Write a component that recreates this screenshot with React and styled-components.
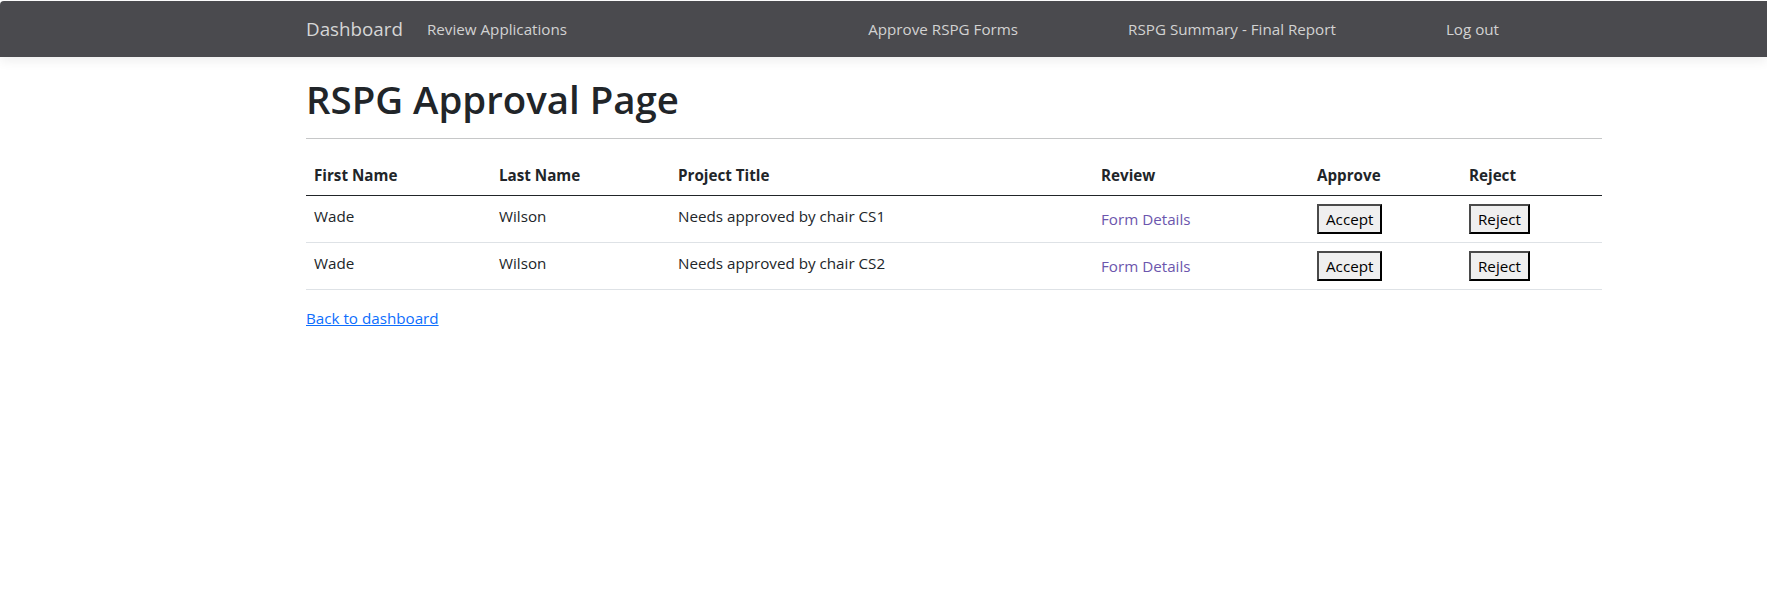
import React from "react";
import styled, { createGlobalStyle } from "styled-components";

const GlobalStyle = createGlobalStyle`
  body {
    margin: 0;
    padding-top: 1px;
    background: #fff;
    font-family: "Open Sans", "Liberation Sans", sans-serif;
    font-size: 15.2px;
    color: #212529;
  }
`;

const Navbar = styled.nav`
  height: 56px;
  background: #4a4a4e;
  border-top-left-radius: 4px;
  box-shadow: 0 4px 12px rgba(0, 0, 0, 0.07);
  display: flex;
  align-items: center;
`;

const NavInner = styled.div`
  width: 1296px;
  margin-left: 306px;
  display: flex;
  align-items: center;
`;

const Brand = styled.a`
  font-size: 18.8px;
  color: #d6d6d6;
  text-decoration: none;
  margin-right: 24px;
`;

const NavLink = styled.a`
  font-size: 15.2px;
  color: #d2d2d2;
  text-decoration: none;
`;

const Spacer = styled.div`
  flex: 1;
`;

const NavRight = styled.div`
  display: flex;
  align-items: center;
  gap: 110px;
  margin-right: 103px;
`;

const Main = styled.main`
  width: 1296px;
  margin-left: 306px;
  padding-top: 20px;
`;

const Title = styled.h1`
  margin: 0;
  font-size: 38.4px;
  font-weight: 600;
  line-height: 45px;
  color: #212529;
`;

const Rule = styled.hr`
  margin: 16px 0 16px;
  border: 0;
  border-top: 1px solid #c6c7c8;
`;

const Table = styled.table`
  width: 100%;
  border-collapse: collapse;
  margin-bottom: 16px;
  table-layout: fixed;
`;

const Th = styled.th`
  box-sizing: border-box;
  text-align: left;
  font-weight: 700;
  padding: 8px;
  line-height: 24px;
  border-bottom: 1.5px solid #212529;
  width: ${(p) => p.$w}px;
`;

const Td = styled.td`
  padding: 8px;
  line-height: 24px;
  border-bottom: 1px solid #dee2e6;
  vertical-align: top;
`;

const DetailsLink = styled.a`
  display: inline-block;
  padding-top: 3px;
  color: #6c56ad;
  text-decoration: none;
`;

const ActionButton = styled.button`
  font-family: "Open Sans", "Liberation Sans", sans-serif;
  font-size: 15.2px;
  color: #000;
  background: #efefef;
  border: 2px solid #000;
  border-color: #4a4a4a #000 #000 #4a4a4a;
  height: 30px;
  padding: 0 7px;
  line-height: 24px;
`;

const BackLink = styled.a`
  color: #0d6efd;
  text-decoration: underline;
  line-height: 24px;
`;

const columns = [
  { label: "First Name", w: 185 },
  { label: "Last Name", w: 179 },
  { label: "Project Title", w: 423 },
  { label: "Review", w: 216 },
  { label: "Approve", w: 152 },
  { label: "Reject", w: 141 }
];

const rows = [
  { first: "Wade", last: "Wilson", title: "Needs approved by chair CS1" },
  { first: "Wade", last: "Wilson", title: "Needs approved by chair CS2" }
];

const App = () => {
  return (
    <>
      <GlobalStyle />
      <Navbar>
        <NavInner>
          <Brand href="#">Dashboard</Brand>
          <NavLink href="#">Review Applications</NavLink>
          <Spacer />
          <NavRight>
            <NavLink href="#">Approve RSPG Forms</NavLink>
            <NavLink href="#">RSPG Summary - Final Report</NavLink>
            <NavLink href="#">Log out</NavLink>
          </NavRight>
        </NavInner>
      </Navbar>
      <Main>
        <Title>RSPG Approval Page</Title>
        <Rule />
        <Table>
          <thead>
            <tr>
              {columns.map((c) => (
                <Th key={c.label} $w={c.w}>
                  {c.label}
                </Th>
              ))}
            </tr>
          </thead>
          <tbody>
            {rows.map((r, i) => (
              <tr key={i}>
                <Td>{r.first}</Td>
                <Td>{r.last}</Td>
                <Td>{r.title}</Td>
                <Td>
                  <DetailsLink href="#">Form Details</DetailsLink>
                </Td>
                <Td>
                  <ActionButton>Accept</ActionButton>
                </Td>
                <Td>
                  <ActionButton>Reject</ActionButton>
                </Td>
              </tr>
            ))}
          </tbody>
        </Table>
        <BackLink href="#">Back to dashboard</BackLink>
      </Main>
    </>
  );
};

export default App;
